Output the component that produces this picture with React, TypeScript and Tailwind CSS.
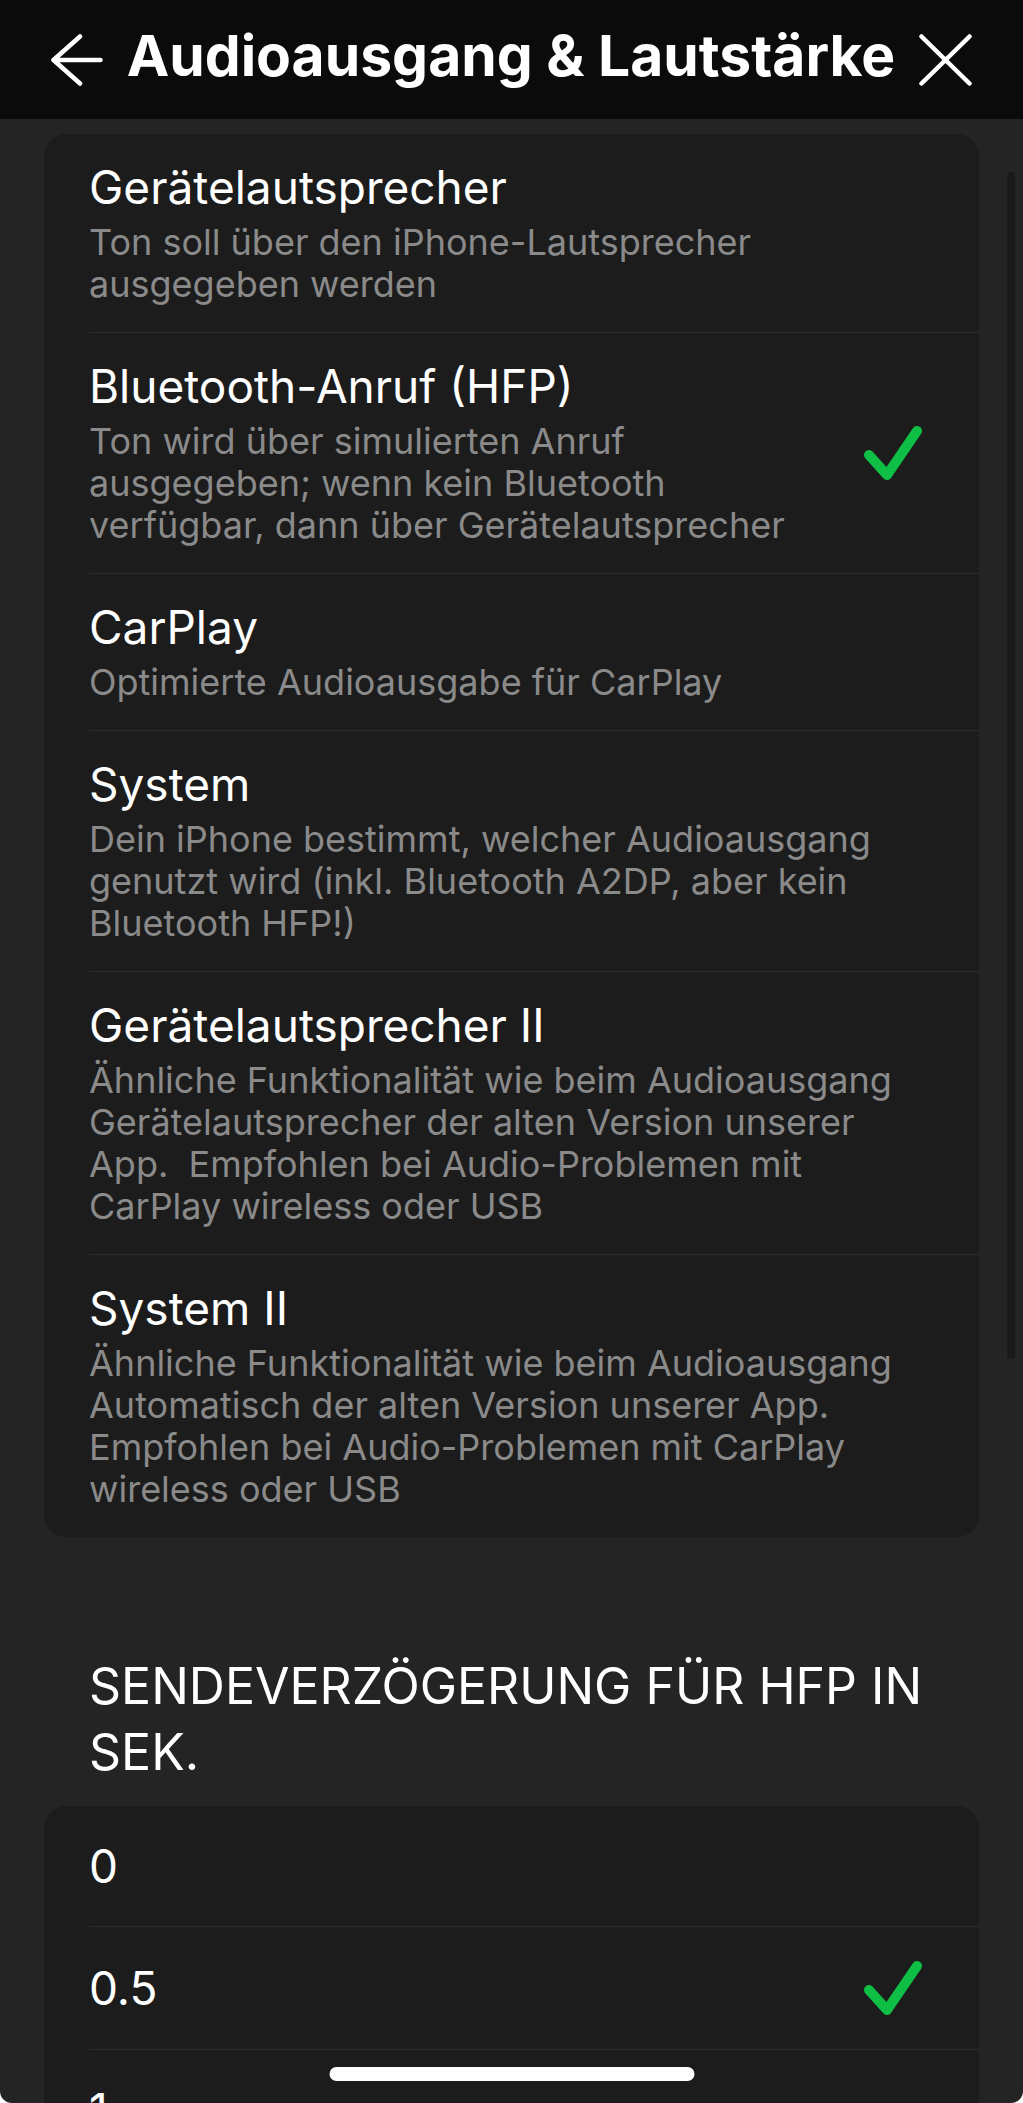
import React from "react";

interface OptionProps {
  title: string;
  desc?: string;
  selected?: boolean;
  first?: boolean;
}

const outputs: OptionProps[] = [
  {
    title: "Gerätelautsprecher",
    desc: "Ton soll über den iPhone-Lautsprecher ausgegeben werden",
  },
  {
    title: "Bluetooth-Anruf (HFP)",
    desc: "Ton wird über simulierten Anruf ausgegeben; wenn kein Bluetooth verfügbar, dann über Gerätelautsprecher",
    selected: true,
  },
  { title: "CarPlay", desc: "Optimierte Audioausgabe für CarPlay" },
  {
    title: "System",
    desc: "Dein iPhone bestimmt, welcher Audioausgang genutzt wird (inkl. Bluetooth A2DP, aber kein Bluetooth HFP!)",
  },
  {
    title: "Gerätelautsprecher II",
    desc: "Ähnliche Funktionalität wie beim Audioausgang Gerätelautsprecher der alten Version unserer App.\u00a0 Empfohlen bei Audio-Problemen mit CarPlay wireless oder USB",
  },
  {
    title: "System II",
    desc: "Ähnliche Funktionalität wie beim Audioausgang Automatisch der alten Version unserer App. Empfohlen bei Audio-Problemen mit CarPlay wireless oder USB",
  },
];

const delays = ["0", "0.5", "1"];

const Check: React.FC = () => (
  <svg width="59" height="56" viewBox="0 0 59 56" className="ml-[62px] shrink-0">
    <path
      d="M6 30 L24 50 L54 6"
      fill="none"
      stroke="#0fbf45"
      strokeWidth="10"
      strokeLinecap="round"
      strokeLinejoin="round"
    />
  </svg>
);

const OptionRow: React.FC<OptionProps> = ({ title, desc, selected, first }) => (
  <div
    className={`flex items-center pr-[57px] ${
      first ? "" : "border-t border-[#2b2b2b]"
    } ${desc ? "pt-[26px] pb-[27px]" : "py-[33px]"}`}
  >
    <div className="flex-1 min-w-0">
      <div className="text-[46px] leading-[54px] text-white">{title}</div>
      {desc && (
        <div className="mt-[7px] text-[36px] leading-[42px] text-[#8a8a8a]">
          {desc}
        </div>
      )}
    </div>
    {selected && <Check />}
  </div>
);

export default function App() {
  return (
    <div className="relative h-[2103px] overflow-hidden rounded-b-[12px] bg-[#242424] font-['Inter',sans-serif]">
      <header className="flex h-[119px] items-center justify-between bg-[#0b0b0b] px-[51px]">
        <svg width="52" height="52" viewBox="0 0 52 52">
          <path
            d="M49.5 26 H2.5 M29 2.5 L2.5 26 L29 49.5"
            fill="none"
            stroke="white"
            strokeWidth="4.5"
            strokeLinecap="round"
            strokeLinejoin="round"
          />
        </svg>
        <h1 className="mb-[9px] text-[57px] font-bold leading-none text-white">
          Audioausgang &amp; Lautstärke
        </h1>
        <svg width="53" height="52" viewBox="0 0 53 52">
          <path
            d="M2.5 2.5 L50.5 49.5 M50.5 2.5 L2.5 49.5"
            fill="none"
            stroke="white"
            strokeWidth="4.5"
            strokeLinecap="round"
          />
        </svg>
      </header>

      <main className="px-[44px] pt-[15px]">
        <div className="rounded-[22px] bg-[#1c1c1c] pl-[45px]">
          {outputs.map((o, i) => (
            <OptionRow key={o.title} {...o} first={i === 0} />
          ))}
        </div>

        <h2 className="mt-[116px] mb-[21px] pl-[45px] pr-[40px] text-[50px] leading-[66px] text-white">
          SENDEVERZÖGERUNG FÜR HFP IN SEK.
        </h2>

        <div className="rounded-[22px] bg-[#1c1c1c] pl-[45px]">
          {delays.map((d, i) => (
            <OptionRow key={d} title={d} selected={d === "0.5"} first={i === 0} />
          ))}
        </div>
      </main>

      {/* scroll indicator */}
      <div className="absolute left-[1007px] top-[172px] h-[1187px] w-[8px] rounded-full bg-[#1a1a1a]" />

      {/* home indicator */}
      <div className="absolute bottom-[22px] left-1/2 h-[14px] w-[365px] -translate-x-1/2 rounded-full bg-white" />
    </div>
  );
}
